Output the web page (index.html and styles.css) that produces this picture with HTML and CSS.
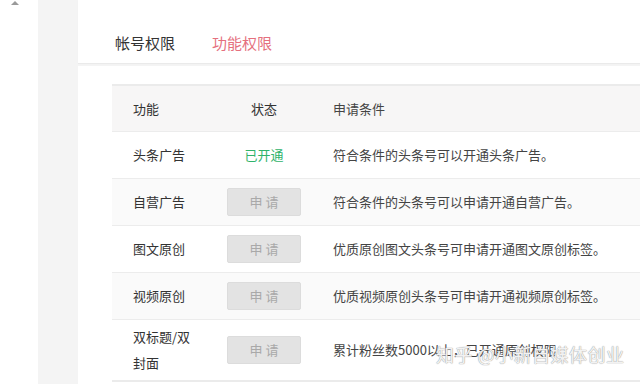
FILE: index.html
```html
<!DOCTYPE html>
<html lang="zh-CN">
<head>
    <meta charset="UTF-8">
    <title>功能权限</title>
    <link rel="stylesheet" href="styles.css">
</head>
<body>
    <div class="page">
        <aside class="sidebar">
            <span class="arrow-up"></span>
        </aside>

        <main class="main">
            <div class="card tabs">
                <span class="tab">帐号权限</span>
                <span class="tab active">功能权限</span>
            </div>

            <div class="card content">
                <table class="perm-table">
                    <thead>
                        <tr>
                            <th class="col-name">功能</th>
                            <th class="col-state">状态</th>
                            <th>申请条件</th>
                        </tr>
                    </thead>
                    <tbody>
                        <tr>
                            <td>头条广告</td>
                            <td class="col-state"><span class="opened">已开通</span></td>
                            <td>符合条件的头条号可以开通头条广告。</td>
                        </tr>
                        <tr>
                            <td>自营广告</td>
                            <td class="col-state"><button class="apply-btn">申 请</button></td>
                            <td>符合条件的头条号可以申请开通自营广告。</td>
                        </tr>
                        <tr>
                            <td>图文原创</td>
                            <td class="col-state"><button class="apply-btn">申 请</button></td>
                            <td>优质原创图文头条号可申请开通图文原创标签。</td>
                        </tr>
                        <tr>
                            <td>视频原创</td>
                            <td class="col-state"><button class="apply-btn">申 请</button></td>
                            <td>优质视频原创头条号可申请开通视频原创标签。</td>
                        </tr>
                        <tr class="tall">
                            <td>双标题/双<br>封面</td>
                            <td class="col-state"><button class="apply-btn">申 请</button></td>
                            <td>累计粉丝数5000以上，已开通原创权限</td>
                        </tr>
                    </tbody>
                </table>
            </div>
        </main>
    </div>

    <div class="watermark">知乎 @小新自媒体创业</div>
</body>
</html>
```

FILE: styles.css
```css
* {
    box-sizing: border-box;
    margin: 0;
    padding: 0;
}

body {
    font-family: "Noto Sans CJK SC", "Microsoft YaHei", sans-serif;
    color: #333;
    background: #fff;
    width: 640px;
    height: 384px;
    overflow: hidden;
    position: relative;
}

.page {
    display: flex;
    height: 384px;
}

.sidebar {
    width: 38px;
    background: #fff;
}

.arrow-up {
    display: block;
    width: 0;
    height: 0;
    margin: 1px 0 0 11px;
    border-left: 4px solid transparent;
    border-right: 4px solid transparent;
    border-bottom: 4px solid #9a9a9a;
}

.main {
    flex: 1;
    background: #f4f4f4;
    padding-left: 40px;
    display: flex;
    flex-direction: column;
    gap: 3px;
}

.card {
    background: #fff;
}

.tabs {
    height: 63px;
    display: flex;
    align-items: flex-end;
    gap: 37px;
    padding: 0 0 10px 37px;
    box-shadow: 0 1px 1px rgba(0, 0, 0, 0.04);
}

.tab {
    font-size: 15px;
    line-height: 20px;
    color: #333;
}

.tab.active {
    color: #e5707e;
}

.content {
    flex: 1;
    padding: 18px 0 0 34px;
}

.perm-table {
    width: 100%;
    border-collapse: collapse;
    font-size: 13px;
}

.perm-table th,
.perm-table td {
    text-align: left;
    font-weight: normal;
    padding: 0 0 0 21px;
    height: 47px;
    border-top: 1px solid #ececec;
    color: #333;
}

.perm-table thead th {
    background: #f7f6f6;
    height: 46px;
    border-top: 2px solid #ebebeb;
}

.perm-table td:last-child,
.perm-table th:last-child {
    padding-left: 15px;
    color: #444;
}

.perm-table .col-name {
    width: 98px;
}

.perm-table .col-state {
    width: 108px;
    padding: 0;
    text-align: center;
}

.perm-table tbody tr:nth-child(even) td {
    background: #fafafa;
}

.perm-table tr.tall td {
    height: 62px;
    line-height: 26px;
    border-bottom: 2px solid #ebebeb;
}

.opened {
    color: #2fb36a;
}

.apply-btn {
    width: 74px;
    height: 28px;
    border: 1px solid #dcdcdc;
    border-radius: 2px;
    background: #e3e3e3;
    color: #a9a9a9;
    font-family: inherit;
    font-size: 13px;
}

.watermark {
    position: absolute;
    left: 436px;
    top: 341px;
    font-size: 18px;
    letter-spacing: 0.5px;
    color: rgba(255, 255, 255, 0.9);
    text-shadow: 0 0 1px #999, 0 0 1px #aaa;
    white-space: nowrap;
}
```
